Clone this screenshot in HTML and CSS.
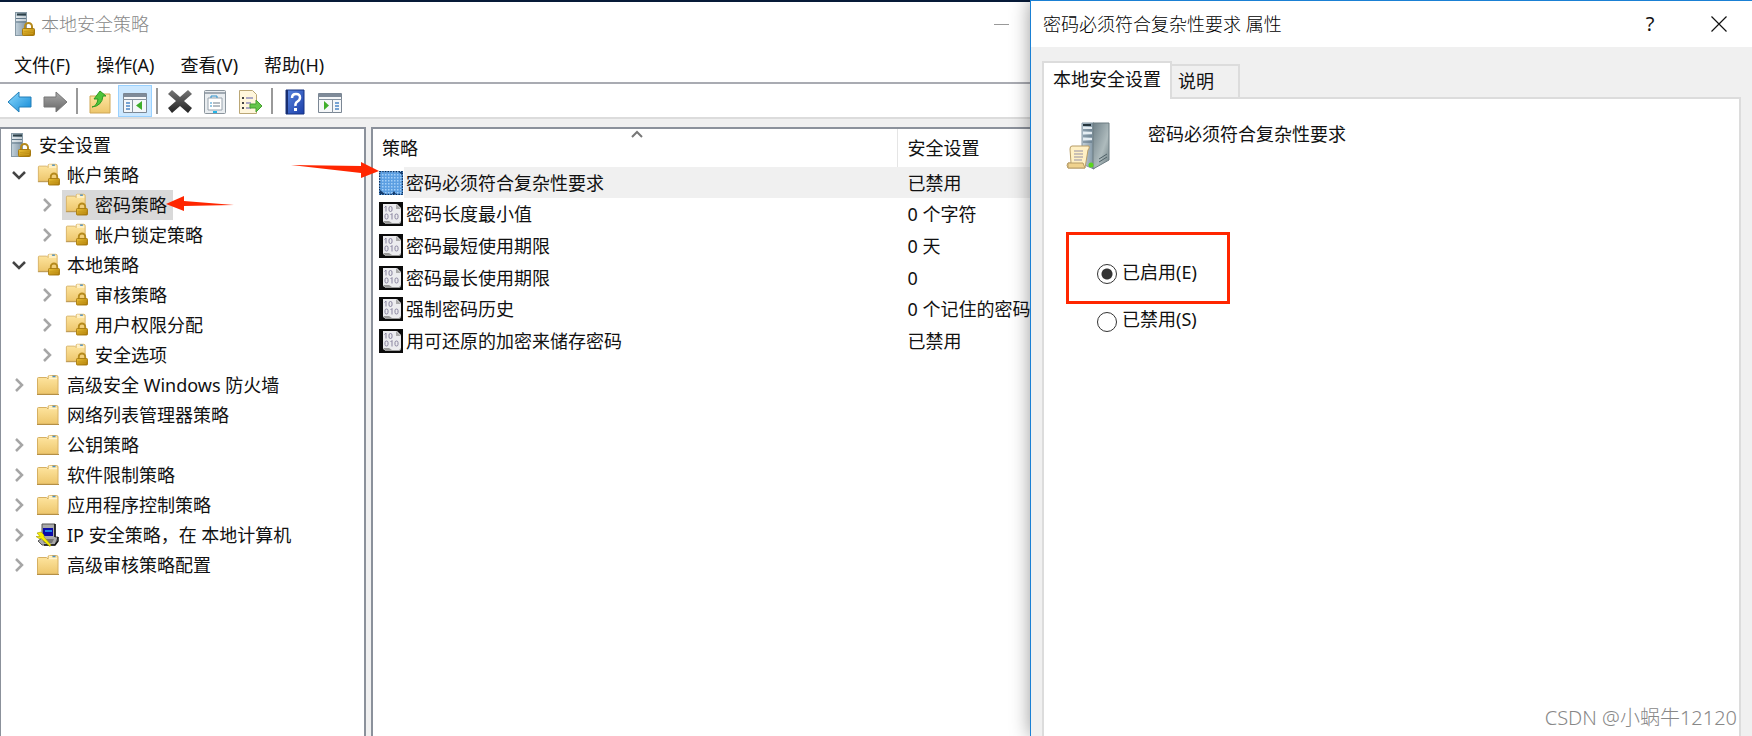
FILE: index.html
```html
<!DOCTYPE html>
<html lang="zh-CN">
<head>
<meta charset="utf-8">
<title>本地安全策略</title>
<link rel="stylesheet" href="styles.css">
</head>
<body>
<svg class="defs" aria-hidden="true">
  <defs>
    <linearGradient id="g-folder" x1="0" y1="0" x2="0" y2="1"><stop offset="0" stop-color="#ffe7a3"/><stop offset="1" stop-color="#edc66c"/></linearGradient>
    <linearGradient id="g-lock" x1="0" y1="0" x2="1" y2="1"><stop offset="0" stop-color="#f0c63a"/><stop offset="1" stop-color="#a87400"/></linearGradient>
    <linearGradient id="g-server" x1="0" y1="0" x2="1" y2="0"><stop offset="0" stop-color="#c3d2dc"/><stop offset="1" stop-color="#8094a2"/></linearGradient>
    <linearGradient id="g-side" x1="0" y1="0" x2="1" y2="1"><stop offset="0" stop-color="#6f8088"/><stop offset=".6" stop-color="#aebbbd"/><stop offset="1" stop-color="#6e7f83"/></linearGradient>
    <linearGradient id="g-blue" x1="0" y1="0" x2="1" y2="1"><stop offset="0" stop-color="#8fdcff"/><stop offset="1" stop-color="#0e86d4"/></linearGradient>
    <linearGradient id="g-gray" x1="0" y1="0" x2="0" y2="1"><stop offset="0" stop-color="#aaa"/><stop offset="1" stop-color="#666"/></linearGradient>
    <linearGradient id="g-x" x1="0" y1="0" x2="0" y2="1"><stop offset="0" stop-color="#777"/><stop offset="1" stop-color="#222"/></linearGradient>
    <linearGradient id="g-help" x1="0" y1="0" x2="1" y2="1"><stop offset="0" stop-color="#5a86e0"/><stop offset="1" stop-color="#1b3ea8"/></linearGradient>
    <pattern id="p-dots" width="3" height="3" patternUnits="userSpaceOnUse"><rect width="3" height="3" fill="#5c9fe2"/><rect width="1.500" height="1.500" fill="#a4d0f8"/></pattern>
  </defs>
  <symbol id="lock" viewBox="0 0 13 14">
    <path d="M3 7V4.500a3.500 3.500 0 0 1 7 0V7" fill="none" stroke="#b58a1c" stroke-width="2"/>
    <rect x=".5" y="6.500" width="12" height="7" rx="1" fill="url(#g-lock)" stroke="#a67a10"/>
    <path d="M2 9.500h9M2 11.500h9" stroke="#c99c1e"/>
  </symbol>
  <symbol id="server" viewBox="0 0 20 24">
    <rect x=".5" y=".5" width="11" height="23" fill="url(#g-server)" stroke="#8799a5"/>
    <path d="M2 2.500h9" stroke="#2d4048" stroke-width="2"/><path d="M1 5h10M1 8h10" stroke="#fff"/><path d="M1 6.500h10M1 10h10" stroke="#5f7687"/>
    <use href="#lock" x="7" y="10" width="13" height="14"/>
  </symbol>
  <symbol id="folder" viewBox="0 0 24 24">
    <path d="M1.500 21V5.500q0-1 1-1h8l1.500 1.500V4q0-1.500 1.500-1.500h7q1.500 0 1.500 1.500v17z" fill="url(#g-folder)" stroke="#d6b062"/>
    <path d="M13 5.500h8M13 3.500h3" stroke="#fff4cf" stroke-width="1.500"/><path d="M16.500 3.500h3" stroke="#4a90c8" stroke-width="1.500"/>
    <path d="M1 21.500h22" stroke="#b58f45"/>
  </symbol>
  <symbol id="folder-lock" viewBox="0 0 24 24">
    <use href="#folder" width="24" height="22" y="-1"/><use href="#lock" x="12" y="9" width="12" height="14"/>
  </symbol>
  <symbol id="ip" viewBox="0 0 24 24">
    <path d="M6 1h13v13h3l-3 8H6l-4-4 4-3z" fill="#a9a9a9" stroke="#555"/><path d="M19 1v13M22 14v4l-3 4H8" fill="none" stroke="#111" stroke-width="1.500"/>
    <rect x="7" y="5" width="10" height="8" fill="#0a0aa8"/><path d="M9 7h7v2H9z" fill="#1e83e8"/><path d="M6 16h12l-2 4H8z" fill="#777"/>
    <path d="M1 10l4-1 3 3v2l7 8-1 1.500-9-8H3l-3-2h4z" fill="#f7ee00" stroke="#a59b00" stroke-width=".6"/>
  </symbol>
  <symbol id="policy" viewBox="0 0 24 24">
    <path d="M0 0h24v24H0z" fill="#0b0b0b"/><path d="M4 2h14l4 4v14l-2 2H7l-3-2z" fill="#ececef"/><path d="M17 2l5 5h-5z" fill="#aaa"/>
    <path d="M4 19h6l3 2h7l2-2v2l-2 1H7z" fill="#999"/>
    <g fill="none" stroke="#8984a0"><path d="M7 4v5.500M5.500 5.500L7 4"/><rect x="10" y="4.500" width="3" height="5" rx="1.500"/><rect x="6" y="12" width="3" height="5" rx="1.500"/><path d="M13 11.500v6M11.500 13l1.500-1.500"/><rect x="16" y="12" width="3" height="5" rx="1.500"/></g>
  </symbol>
  <symbol id="policy-on" viewBox="0 0 24 24">
    <path d="M0 0h24v24H0z" fill="url(#p-dots)"/><path d="M.5.5h23v23H.5z" fill="none" stroke="#0b2f5c" stroke-width="1.500" stroke-dasharray="1.500 1.200"/><path d="M1 19l5 4H1zM13 23l2-3 2 3zM20 1h3v3z" fill="#123a6c"/>
  </symbol>
  <symbol id="down" viewBox="0 0 20 14"><path d="M4 4l6 6 6-6" fill="none" stroke="#444" stroke-width="2.500"/></symbol>
  <symbol id="right" viewBox="0 0 20 14"><path d="M7 1l6 6-6 6" fill="none" stroke="#a6a6a6" stroke-width="2.500"/></symbol>
</svg>

<div class="desktop">
  <main class="console">
    <header class="titlebar">
      <svg class="title-icon"><use href="#server"/></svg>
      <h1 class="title">本地安全策略</h1>
      <button class="minimize" aria-label="最小化"></button>
    </header>
    <nav class="menu">
      <button class="menu-item">文件(F)</button>
      <button class="menu-item">操作(A)</button>
      <button class="menu-item">查看(V)</button>
      <button class="menu-item">帮助(H)</button>
    </nav>
    <div class="toolbar" role="toolbar">
      <button class="tool" aria-label="后退"><svg viewBox="0 0 26 26"><path d="M1 13L12 3v5h12v10H12v5z" fill="url(#g-blue)" stroke="#237fb8"/></svg></button>
      <button class="tool" aria-label="前进"><svg viewBox="0 0 26 26"><path d="M25 13L14 3v5H2v10h12v5z" fill="url(#g-gray)" stroke="#777"/></svg></button>
      <span class="divider"></span>
      <button class="tool" aria-label="向上"><svg viewBox="0 0 26 26"><path d="M3 24V7h8l2-2h10v19z" fill="url(#g-folder)" stroke="#cfa654"/><path d="M5 18q5-1 6-8H7l6-8 6 5h-3q-1 10-11 11z" fill="#4fc43a" stroke="#2e9a22"/></svg></button>
      <button class="tool tool-on" aria-label="显示控制台树"><svg viewBox="0 0 26 26"><path d="M1.500 4.500h23v19h-23z" fill="#f5f7f9" stroke="#7b8794"/><path d="M2 6.500h22" stroke="#7f8b99" stroke-width="3"/><path d="M1 10.500h24M10.500 11v13" stroke="#8793a0"/><path d="M4 14h4M4 17h4M4 20h4" stroke="#4b86c6" stroke-width="1.500"/><path d="M20 12v9l-6-4.500z" fill="#3fae2a"/></svg></button>
      <span class="divider"></span>
      <button class="tool" aria-label="删除"><svg viewBox="0 0 26 26"><path d="M5 1l8 7 8-7 4 4-8 7 8 7-4 5-8-7-8 7-4-5 8-7-8-7z" fill="url(#g-x)"/></svg></button>
      <button class="tool" aria-label="属性"><svg viewBox="0 0 26 26"><rect x="2.500" y="1.500" width="21" height="23" rx="1" fill="#e9edf0" stroke="#8b959d"/><path d="M3 4h20" stroke="#a0a9b2" stroke-width="2"/><path d="M6 9h14v12H6z" fill="#fff" stroke="#98a3ad"/><path d="M9 9V7h6v2M8 14h2M8 17h2" fill="none" stroke="#2c91cb"/><path d="M11 14h7M11 17h7" stroke="#6a7b88"/><path d="M11 23h4" stroke="#23b3e6" stroke-width="2"/></svg></button>
      <button class="tool" aria-label="导出列表"><svg viewBox="0 0 26 26"><path d="M2.500 1.500h13l4 4v19h-17z" fill="#fff6dc" stroke="#bba776"/><path d="M5 9h2M5 14h2M5 19h2" stroke="#444" stroke-width="2"/><path d="M9 9h7M9 14h5M9 19h5" stroke="#9290bd" stroke-width="1.500"/><path d="M13 15h6v-4l6 6-6 6v-4h-6z" fill="#65c64a" stroke="#459f2e"/></svg></button>
      <span class="divider"></span>
      <button class="tool" aria-label="帮助"><svg viewBox="0 0 26 26"><path d="M4 1h18v24H4z" fill="url(#g-help)" stroke="#173382"/><path d="M5 1v24" stroke="#172e70" stroke-width="2"/><path d="M10 9q0-4 4-4t4 3.500q0 2.500-2.500 4T13.500 17" fill="none" stroke="#fff" stroke-width="2.500"/><path d="M12 19h3v3h-3z" fill="#fff"/></svg></button>
      <button class="tool" aria-label="操作窗格"><svg viewBox="0 0 26 26"><path d="M1.500 4.500h23v19h-23z" fill="#f5f7f9" stroke="#7b8794"/><path d="M2 6.500h22" stroke="#7f8b99" stroke-width="3"/><path d="M1 10.500h24M15.500 11v13" stroke="#8793a0"/><path d="M18 14h4M18 17h4M18 20h4" stroke="#4b86c6" stroke-width="1.500"/><path d="M7 12v9l5-4.500z" fill="#3fae2a"/></svg></button>
    </div>
    <div class="panes">
      <section class="pane tree-pane" aria-label="控制台树">
        <ul class="tree">
          <li><div class="node root"><svg class="icon-server"><use href="#server"/></svg><span>安全设置</span></div>
            <ul>
              <li><div class="node"><svg class="chev"><use href="#down"/></svg><svg class="icon"><use href="#folder-lock"/></svg><span>帐户策略</span></div>
                <ul class="sub">
                  <li><div class="node"><svg class="chev"><use href="#right"/></svg><span class="picked"><svg class="icon"><use href="#folder-lock"/></svg><span>密码策略</span>
                    <svg class="arrow-left" viewBox="0 0 68 16"><path d="M0 8L18 0v5l50 4-50 1v5z" fill="#ff2600"/></svg></span></div></li>
                  <li><div class="node"><svg class="chev"><use href="#right"/></svg><svg class="icon"><use href="#folder-lock"/></svg><span>帐户锁定策略</span></div></li>
                </ul></li>
              <li><div class="node"><svg class="chev"><use href="#down"/></svg><svg class="icon"><use href="#folder-lock"/></svg><span>本地策略</span></div>
                <ul class="sub">
                  <li><div class="node"><svg class="chev"><use href="#right"/></svg><svg class="icon"><use href="#folder-lock"/></svg><span>审核策略</span></div></li>
                  <li><div class="node"><svg class="chev"><use href="#right"/></svg><svg class="icon"><use href="#folder-lock"/></svg><span>用户权限分配</span></div></li>
                  <li><div class="node"><svg class="chev"><use href="#right"/></svg><svg class="icon"><use href="#folder-lock"/></svg><span>安全选项</span></div></li>
                </ul></li>
              <li><div class="node"><svg class="chev"><use href="#right"/></svg><svg class="icon"><use href="#folder"/></svg><span>高级安全 Windows 防火墙</span></div></li>
              <li><div class="node"><svg class="chev"></svg><svg class="icon"><use href="#folder"/></svg><span>网络列表管理器策略</span></div></li>
              <li><div class="node"><svg class="chev"><use href="#right"/></svg><svg class="icon"><use href="#folder"/></svg><span>公钥策略</span></div></li>
              <li><div class="node"><svg class="chev"><use href="#right"/></svg><svg class="icon"><use href="#folder"/></svg><span>软件限制策略</span></div></li>
              <li><div class="node"><svg class="chev"><use href="#right"/></svg><svg class="icon"><use href="#folder"/></svg><span>应用程序控制策略</span></div></li>
              <li><div class="node"><svg class="chev"><use href="#right"/></svg><svg class="icon"><use href="#ip"/></svg><span>IP 安全策略，在 本地计算机</span></div></li>
              <li><div class="node"><svg class="chev"><use href="#right"/></svg><svg class="icon"><use href="#folder"/></svg><span>高级审核策略配置</span></div></li>
            </ul></li>
        </ul>
      </section>
      <section class="pane list-pane" aria-label="策略列表">
        <svg class="arrow-right" viewBox="0 0 88 16"><path d="M88 9L70 0v4L0 3l70 8v5z" fill="#ff2600"/></svg>
        <svg class="sort" viewBox="0 0 12 8"><path d="M1 7l5-5 5 5" fill="none" stroke="#777" stroke-width="2"/></svg>
        <table class="list">
          <thead><tr><th class="col-name">策略</th><th class="col-value">安全设置</th></tr></thead>
          <tbody>
            <tr class="current"><td><span class="cell"><svg class="icon"><use href="#policy-on"/></svg><span class="name">密码必须符合复杂性要求</span></span></td><td>已禁用</td></tr>
            <tr><td><span class="cell"><svg class="icon"><use href="#policy"/></svg><span class="name">密码长度最小值</span></span></td><td>0 个字符</td></tr>
            <tr><td><span class="cell"><svg class="icon"><use href="#policy"/></svg><span class="name">密码最短使用期限</span></span></td><td>0 天</td></tr>
            <tr><td><span class="cell"><svg class="icon"><use href="#policy"/></svg><span class="name">密码最长使用期限</span></span></td><td>0</td></tr>
            <tr><td><span class="cell"><svg class="icon"><use href="#policy"/></svg><span class="name">强制密码历史</span></span></td><td>0 个记住的密码</td></tr>
            <tr><td><span class="cell"><svg class="icon"><use href="#policy"/></svg><span class="name">用可还原的加密来储存密码</span></span></td><td>已禁用</td></tr>
          </tbody>
        </table>
      </section>
    </div>
  </main>

  <aside class="dialog" role="dialog" aria-labelledby="dialog-title">
    <header class="dialog-bar">
      <h2 class="dialog-title" id="dialog-title">密码必须符合复杂性要求 属性</h2>
      <button class="dialog-button help">?</button>
      <button class="dialog-button" aria-label="关闭"><svg class="close" viewBox="0 0 16 16"><path d="M.5.5l15 15M15.500.5l-15 15" stroke="#111" stroke-width="1.200"/></svg></button>
    </header>
    <div class="dialog-body">
      <div class="tabs" role="tablist">
        <button class="tab tab-on" role="tab" aria-selected="true">本地安全设置</button>
        <button class="tab" role="tab" aria-selected="false">说明</button>
      </div>
      <div class="page" role="tabpanel">
        <div class="policy-head">
          <svg class="policy-icon" viewBox="0 0 44 48"><path d="M16 1h12v46l-12-5z" fill="url(#g-server)" stroke="#8496a2"/><path d="M27 1h16v37L27 47z" fill="url(#g-side)" stroke="#6c7c82"/><path d="M17 3h8" stroke="#25343c" stroke-width="2"/><path d="M17 6h9M17 11h9M17 17h9" stroke="#e5edf2" stroke-width="2"/><path d="M17 8h9M17 14h9M17 20h9" stroke="#586f7e"/><path d="M33 37l8-5M33 40l8-5" stroke="#4f6167"/><circle cx="25" cy="43" r="2.500" fill="#59d51c"/><path d="M6 24h17q1 2-1 4l-3 18H2q-2-3 0-5h3L4 27q0-3 2-3z" fill="#fff0c4" stroke="#b79c66"/><path d="M2 41h15l2 5H2z" fill="#efd28e" stroke="#b79c66"/><path d="M8 29h9M8 32h9M8 35h9M8 38h8" stroke="#9590a5"/></svg>
          <p class="policy-name">密码必须符合复杂性要求</p>
        </div>
        <div class="choices">
          <label class="choice marked"><input class="radio" type="radio" name="state" checked><span>已启用(E)</span></label>
          <label class="choice"><input class="radio" type="radio" name="state"><span>已禁用(S)</span></label>
        </div>
      </div>
    </div>
    <p class="watermark">CSDN @小蜗牛12120</p>
  </aside>
</div>
</body>
</html>
```

FILE: styles.css
```css
* { box-sizing: border-box; }

body, h1, h2, p, ul { margin: 0; padding: 0; }

body {
  font: 18px/24px "Noto Sans", "Noto Sans CJK SC", sans-serif;
  color: #111;
  background: #fff;
}

ul { list-style: none; }

button {
  margin: 0;
  padding: 0;
  border: 0;
  background: none;
  font: inherit;
  color: inherit;
}

svg { display: block; flex: none; }

.defs { position: absolute; width: 0; height: 0; }

.desktop {
  display: grid;
  grid-template-columns: minmax(0, 1030fr) minmax(0, 722fr);
  height: 100vh;
  overflow: hidden;
}

/* Console window */
.console {
  display: flex;
  flex-direction: column;
  min-height: 0;
  border-top: 2px solid #061a38;
}

.titlebar {
  display: flex;
  align-items: center;
  gap: 6px;
  height: 44px;
  padding: 0 21px 0 15px;
}

.title-icon { width: 20px; height: 24px; }

.title {
  flex: 1;
  font-size: 18px;
  font-weight: 300;
  color: #888;
}

.minimize { width: 15px; height: 1px; background: #999; }

.menu {
  display: flex;
  gap: 26px;
  height: 38px;
  padding: 1px 0 0 14px;
  border-bottom: 2px solid #a9abb2;
}

.menu-item { white-space: nowrap; }

.toolbar {
  display: flex;
  align-items: center;
  gap: 1px;
  height: 35px;
  padding-left: 3px;
  border-bottom: 2px solid #dcdcdc;
}

.tool {
  display: grid;
  place-items: center;
  width: 34px;
  height: 32px;
  padding-top: 3px;
}

.tool svg { width: 26px; height: 26px; }

.tool-on { background: #cce8ff; border: 1px solid #99d1ff; }

.divider {
  width: 2px;
  height: 26px;
  margin: 0 4px 0 3px;
  background: #999;
}

.panes {
  flex: 1;
  display: grid;
  grid-template-columns: minmax(0, 366fr) minmax(0, 659fr);
  gap: 5px;
  min-height: 0;
  padding-top: 8px;
  background: #f0f0f0;
}

.pane {
  border: 2px solid #8b919b;
  border-bottom: 0;
  background: #fff;
}

/* Tree */
.tree-pane { padding-left: 8px; border-left-width: 1px; }

.tree { padding-top: 1px; }

.node {
  display: flex;
  align-items: center;
  height: 30px;
  gap: 7px;
  white-space: nowrap;
}

.root { padding-left: 2px; gap: 8px; }

.icon-server { width: 20px; height: 24px; }

.icon { width: 24px; height: 24px; }

.chev { width: 20px; height: 14px; }

.sub { padding-left: 28px; }

.picked {
  position: relative;
  display: flex;
  align-items: center;
  gap: 7px;
  height: 30px;
  margin-left: -2px;
  padding: 0 6px 0 2px;
  background: #d9d9d9;
}

.arrow-left {
  position: absolute;
  top: 6px;
  left: calc(100% - 7px);
  width: 68px;
  height: 16px;
}

/* List */
.list-pane {
  position: relative;
  border-right: 0;
  padding-left: 6px;
}

.arrow-right {
  position: absolute;
  top: 33px;
  left: -82px;
  width: 88px;
  height: 16px;
}

.sort {
  position: absolute;
  top: 1px;
  left: 258px;
  width: 12px;
  height: 8px;
}

.list {
  width: 100%;
  table-layout: fixed;
  border-collapse: separate;
  border-spacing: 0;
}

.list th, .list td { padding: 0; text-align: left; white-space: nowrap; }

.list th { height: 38px; font-weight: 400; }

.list .col-name { width: 79.5%; padding-left: 3px; }

.list .col-value { padding-left: 10px; border-left: 1px solid #e5e5e5; }

.list tbody tr { height: 32px; }

.list tbody tr:nth-child(3n+1) { height: 31px; }

.list td + td { padding-left: 11px; }

.cell { display: flex; align-items: center; }

.name { padding-left: 3px; }

.current { background: linear-gradient(to right, #fff 25px, #f0f0f0 25px); }

/* Properties dialog */
.dialog {
  position: relative;
  display: flex;
  flex-direction: column;
  min-height: 0;
  border: solid #1a80d4;
  border-width: 1px 0 0 1px;
  background: #f0f0f0;
  box-shadow: 0 0 18px rgba(0, 0, 0, 0.4);
}

.dialog-bar {
  display: flex;
  align-items: center;
  height: 46px;
  padding-left: 12px;
  background: #fff;
}

.dialog-title { flex: 1; font-size: 18px; font-weight: 300; color: #000; }

.dialog-button {
  display: grid;
  place-items: center;
  width: 66px;
  height: 46px;
}

.help { width: 72px; font-size: 20px; }

.close { width: 16px; height: 16px; }

.dialog-body {
  flex: 1;
  display: flex;
  flex-direction: column;
  padding: 14px 11px 0;
}

.tabs { display: flex; align-items: flex-end; height: 36px; }

.tab {
  height: 33px;
  padding: 0 24px 2px 6px;
  border: 2px solid #dcdcdc;
  border-left: 0;
  border-bottom: 0;
}

.tab-on {
  position: relative;
  height: 38px;
  margin-bottom: -2px;
  padding: 0 9px 5px;
  border-left: 2px solid #dcdcdc;
  background: #fff;
}

.page {
  flex: 1;
  padding: 23px 22px;
  border: 2px solid #dcdcdc;
  border-bottom: 0;
  background: #fff;
}

.policy-head { display: flex; gap: 38px; height: 110px; }

.policy-icon { width: 44px; height: 48px; }

.choices { display: flex; flex-direction: column; align-items: flex-start; }

.choice {
  display: flex;
  align-items: center;
  gap: 5px;
  padding: 3px 31px;
}

.marked {
  height: 72px;
  padding: 12px 30px 0 28px;
  border: 3px solid #ff2600;
}

.choice span { padding-bottom: 5px; }

.radio {
  appearance: none;
  width: 20px;
  height: 20px;
  margin: 0;
  border: 1px solid #333;
  border-radius: 50%;
  background: #fff;
}

.radio:checked { background: radial-gradient(circle, #333 5px, #fff 6px); }

.watermark {
  position: absolute;
  right: 15px;
  bottom: 6px;
  font: 300 20px/24px "Noto Sans", "Noto Sans CJK SC", sans-serif;
  color: #888;
}
```
